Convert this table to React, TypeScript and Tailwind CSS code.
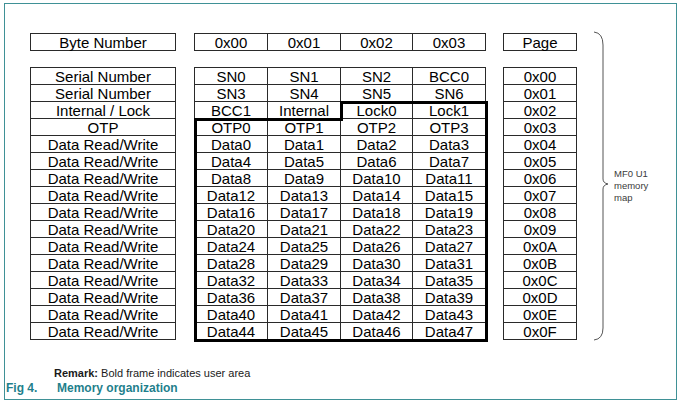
const labels = [
  'Serial Number',
  'Serial Number',
  'Internal / Lock',
  'OTP',
  ...Array.from({ length: 12 }, () => 'Data Read/Write'),
];

const hexRows: string[][] = [
  ['SN0', 'SN1', 'SN2', 'BCC0'],
  ['SN3', 'SN4', 'SN5', 'SN6'],
  ['BCC1', 'Internal', 'Lock0', 'Lock1'],
  ['OTP0', 'OTP1', 'OTP2', 'OTP3'],
  ...Array.from({ length: 12 }, (_, r) => [0, 1, 2, 3].map((c) => `Data${r * 4 + c}`)),
];

const pages = Array.from({ length: 16 }, (_, i) => `0x0${i.toString(16).toUpperCase()}`);

function Cell({ children }: { children: React.ReactNode }) {
  return (
    <div className="h-[17px] flex items-center justify-center border-r border-b border-[#2a2a2a] leading-none whitespace-nowrap">
      {children}
    </div>
  );
}

export default function App() {
  return (
    <div
      className="w-[680px] h-[401px] bg-white pt-[3px] pl-[4px] text-black overflow-hidden"
      style={{ fontFamily: '"Liberation Sans", Arial, sans-serif' }}
    >
      <div className="w-[673px] h-[397px] border border-[#3f9196] flex flex-col">
        <div className="flex items-start pt-[29px] pl-[25px] text-[15px]">
          {/* field names */}
          <div className="w-[146px] flex flex-col">
            <div className="border-l border-t border-[#2a2a2a]">
              <Cell>Byte Number</Cell>
            </div>
            <div className="mt-[16px] border-l border-t border-[#2a2a2a]">
              {labels.map((l, i) => (
                <Cell key={i}>{l}</Cell>
              ))}
            </div>
          </div>

          {/* bytes */}
          <div className="ml-[18px] flex flex-col">
            <div className="grid grid-cols-[73px_73px_72px_73px] border-l border-t border-[#2a2a2a]">
              {['0x00', '0x01', '0x02', '0x03'].map((h) => (
                <Cell key={h}>{h}</Cell>
              ))}
            </div>
            <div className="relative mt-[16px] grid grid-cols-[73px_73px_72px_73px] border-l border-t border-[#2a2a2a]">
              {hexRows.flat().map((v, i) => (
                <Cell key={i}>{v}</Cell>
              ))}
              <svg
                className="absolute top-0 left-0 pointer-events-none overflow-visible"
                width="292"
                height="274"
              >
                <polygon
                  points="146.5,34.5 291.5,34.5 291.5,272.5 0.5,272.5 0.5,51.5 146.5,51.5"
                  fill="none"
                  stroke="#000"
                  strokeWidth="3"
                />
              </svg>
            </div>
          </div>

          {/* page */}
          <div className="ml-[17px] w-[74px] flex flex-col">
            <div className="border-l border-t border-[#2a2a2a]">
              <Cell>Page</Cell>
            </div>
            <div className="mt-[16px] border-l border-t border-[#2a2a2a]">
              {pages.map((p) => (
                <Cell key={p}>{p}</Cell>
              ))}
            </div>
          </div>

          {/* brace */}
          <svg className="ml-[13px] mt-[-3px] shrink-0" width="20" height="312">
            <path
              d="M4,2 Q13,3 13,15 L13,149 Q13,153 18,154 Q13,155 13,159 L13,298 Q13,309 4,310"
              fill="none"
              stroke="#555"
              strokeWidth="1"
            />
          </svg>
          <div className="ml-[4px] self-center mt-[-4px] text-[9.5px] leading-[12px] text-[#3a3a3a]">
            MF0 U1
            <br />
            memory
            <br />
            map
          </div>
        </div>

        <div className="mt-[24px] pl-[49px] text-[11px] leading-[14px] text-[#1a1a1a]">
          <span className="font-bold">Remark:</span> Bold frame indicates user area
        </div>
        <div className="mt-[1px] pl-[1px] text-[12px] leading-[14px] font-bold text-[#1f7f8c]">
          <span className="inline-block w-[51px]">Fig 4.</span>
          <span>Memory organization</span>
        </div>
      </div>
    </div>
  );
}
